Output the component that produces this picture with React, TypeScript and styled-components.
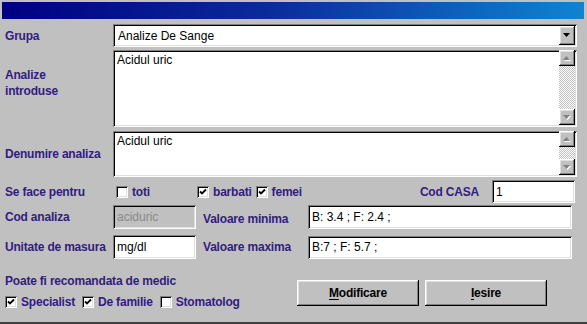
import React from 'react';
import styled, { createGlobalStyle, css } from 'styled-components';

const GlobalStyle = createGlobalStyle`
  html, body {
    margin: 0;
    padding: 0;
    background: #c0c0c0;
  }
  * {
    box-sizing: border-box;
  }
`;

const sunken = css`
  border: none;
  box-shadow: inset 1px 1px #808080, inset -1px -1px #ffffff, inset 2px 2px #000000, inset -2px -2px #dfdfdf;
`;

const raised = css`
  box-shadow: inset -1px -1px #000000, inset 1px 1px #ffffff, inset -2px -2px #808080, inset 2px 2px #dfdfdf;
`;

const Window = styled.div`
  width: 587px;
  height: 324px;
  background: #c0c0c0;
  padding: 2px 3px 0 2px;
  box-shadow: inset 0 -2px #404040;
  font-family: "Liberation Sans", Arial, sans-serif;
`;

const TitleBar = styled.div`
  height: 17px;
  background: linear-gradient(90deg, #000080 0%, #0a2a9a 45%, #1084d0 100%);
`;

const Form = styled.div`
  display: flex;
  flex-direction: column;
  padding: 5px 0 0 3px;
`;

const Row = styled.div<{ $h: number; $mt?: number; $align?: string }>`
  display: flex;
  align-items: ${p => p.$align || 'center'};
  height: ${p => p.$h}px;
  margin-top: ${p => p.$mt || 0}px;
`;

const Label = styled.div<{ $w?: number; $pt?: number; $pl?: number; $right?: boolean }>`
  width: ${p => (p.$w ? `${p.$w}px` : 'auto')};
  flex-shrink: 0;
  font-size: 12px;
  font-weight: bold;
  color: #321c80;
  line-height: 16px;
  padding-top: ${p => p.$pt || 0}px;
  padding-left: ${p => p.$pl || 0}px;
  text-align: ${p => (p.$right ? 'right' : 'left')};
  white-space: nowrap;
  letter-spacing: -0.2px;
`;

const Field = styled.div<{ $w: number; $h: number; $disabled?: boolean; $ml?: number }>`
  ${sunken};
  width: ${p => p.$w}px;
  height: ${p => p.$h}px;
  margin-left: ${p => p.$ml || 0}px;
  background: ${p => (p.$disabled ? '#c0c0c0' : '#ffffff')};
  color: ${p => (p.$disabled ? '#8a8a8a' : '#000000')};
  font-size: 12px;
  line-height: 14px;
  padding: 0 4px;
  display: flex;
  align-items: center;
  flex-shrink: 0;
`;

const SelectBox = styled.div`
  ${sunken};
  position: relative;
  width: 464px;
  height: 23px;
  background: #ffffff;
  font-size: 12px;
  padding: 0 4px 0 5px;
  display: flex;
  align-items: center;
`;

const DropButton = styled.div`
  ${raised};
  position: absolute;
  right: 2px;
  top: 2px;
  bottom: 2px;
  width: 16px;
  background: #c0c0c0;
  display: flex;
  align-items: center;
  justify-content: center;
`;

const Memo = styled.div<{ $h: number }>`
  ${sunken};
  position: relative;
  width: 464px;
  height: ${p => p.$h}px;
  background: #ffffff;
  font-size: 12px;
  line-height: 14px;
  padding: 3px 20px 0 4px;
`;

const ScrollBar = styled.div`
  position: absolute;
  right: 2px;
  top: 0;
  bottom: 2px;
  width: 16px;
  display: flex;
  flex-direction: column;
  justify-content: space-between;
  background-color: #ffffff;
  background-image: repeating-conic-gradient(#c0c0c0 0% 25%, #ffffff 0% 50%);
  background-size: 2px 2px;
`;

const ScrollButton = styled.div`
  ${raised};
  width: 16px;
  height: 16px;
  background: #c0c0c0;
  display: flex;
  align-items: center;
  justify-content: center;
`;

const CheckGroup = styled.label<{ $w?: number; $ml?: number }>`
  display: flex;
  align-items: center;
  gap: 4px;
  width: ${p => (p.$w ? `${p.$w}px` : 'auto')};
  margin-left: ${p => p.$ml || 0}px;
  flex-shrink: 0;
  font-size: 12px;
  font-weight: bold;
  color: #321c80;
  letter-spacing: -0.2px;
`;

const Box = styled.span`
  ${sunken};
  width: 12px;
  height: 12px;
  background: #ffffff;
  display: flex;
  align-items: center;
  justify-content: center;
`;

const Bottom = styled.div`
  display: flex;
  margin-top: 14px;
`;

const LeftCol = styled.div`
  width: 292px;
  display: flex;
  flex-direction: column;
`;

const CheckRow = styled.div`
  display: flex;
  gap: 7px;
  margin-top: 6px;
`;

const Buttons = styled.div`
  display: flex;
  gap: 6px;
  padding-top: 7px;
`;

const Button = styled.button`
  ${raised};
  border: none;
  width: 122px;
  height: 26px;
  background: #c0c0c0;
  font-family: "Liberation Sans", Arial, sans-serif;
  font-size: 12px;
  font-weight: bold;
  color: #000000;
  padding: 0;
  letter-spacing: -0.2px;

  u {
    text-decoration-thickness: 1px;
    text-underline-offset: 2px;
  }
`;

const Check = ({ checked }: { checked: boolean }) => (
  <Box>
    {checked && (
      <svg width="8" height="8" viewBox="0 0 8 8">
        <path d="M1 3.5 L3 5.5 L7 1.5" stroke="#000" strokeWidth="1.8" fill="none" />
      </svg>
    )}
  </Box>
);

const Arrow = ({ dir, color }: { dir: 'up' | 'down'; color: string }) => (
  <svg width="8" height="5" viewBox="0 0 8 5">
    {color !== '#000' && (
      <path d={dir === 'down' ? 'M1 1 H8 L4.5 5 Z' : 'M4.5 1 L8 5 H1 Z'} fill="#ffffff" />
    )}
    <path d={dir === 'down' ? 'M0 0 H7 L3.5 4 Z' : 'M3.5 0 L7 4 H0 Z'} fill={color} />
  </svg>
);

const VScroll = () => (
  <ScrollBar>
    <ScrollButton>
      <Arrow dir="up" color="#808080" />
    </ScrollButton>
    <ScrollButton>
      <Arrow dir="down" color="#808080" />
    </ScrollButton>
  </ScrollBar>
);

export default function App() {
  return (
    <>
      <GlobalStyle />
      <Window>
        <TitleBar />
        <Form>
          <Row $h={23}>
            <Label $w={108}>Grupa</Label>
            <SelectBox>
              Analize De Sange
              <DropButton>
                <Arrow dir="down" color="#000" />
              </DropButton>
            </SelectBox>
          </Row>

          <Row $h={77} $mt={3} $align="flex-start">
            <Label $w={108} $pt={17}>
              Analize
              <br />
              introduse
            </Label>
            <Memo $h={77}>
              Acidul uric
              <VScroll />
            </Memo>
          </Row>

          <Row $h={46} $mt={4}>
            <Label $w={108}>Denumire analiza</Label>
            <Memo $h={46}>
              Acidul uric
              <VScroll />
            </Memo>
          </Row>

          <Row $h={23} $mt={3}>
            <Label $w={111}>Se face pentru</Label>
            <CheckGroup $w={81}>
              <Check checked={false} />
              toti
            </CheckGroup>
            <CheckGroup>
              <Check checked />
              barbati
            </CheckGroup>
            <CheckGroup $ml={4}>
              <Check checked />
              femei
            </CheckGroup>
            <Label $w={177} $right>Cod CASA</Label>
            <Field $w={83} $h={23} $ml={13}>1</Field>
          </Row>

          <Row $h={24} $mt={2}>
            <Label $w={108}>Cod analiza</Label>
            <Field $w={83} $h={24} $disabled>aciduric</Field>
            <Label $w={112} $pl={7} $pt={3}>Valoare minima</Label>
            <Field $w={264} $h={24}>B: 3.4 ; F: 2.4 ;</Field>
          </Row>

          <Row $h={24} $mt={6}>
            <Label $w={108}>Unitate de masura</Label>
            <Field $w={83} $h={24}>mg/dl</Field>
            <Label $w={112} $pl={7}>Valoare maxima</Label>
            <Field $w={264} $h={23}>B:7 ; F: 5.7 ;</Field>
          </Row>

          <Bottom>
            <LeftCol>
              <Label>Poate fi recomandata de medic</Label>
              <CheckRow>
                <CheckGroup>
                  <Check checked />
                  Specialist
                </CheckGroup>
                <CheckGroup>
                  <Check checked />
                  De familie
                </CheckGroup>
                <CheckGroup>
                  <Check checked={false} />
                  Stomatolog
                </CheckGroup>
              </CheckRow>
            </LeftCol>
            <Buttons>
              <Button>
                <u>M</u>odificare
              </Button>
              <Button>
                <u>I</u>esire
              </Button>
            </Buttons>
          </Bottom>
        </Form>
      </Window>
    </>
  );
}
